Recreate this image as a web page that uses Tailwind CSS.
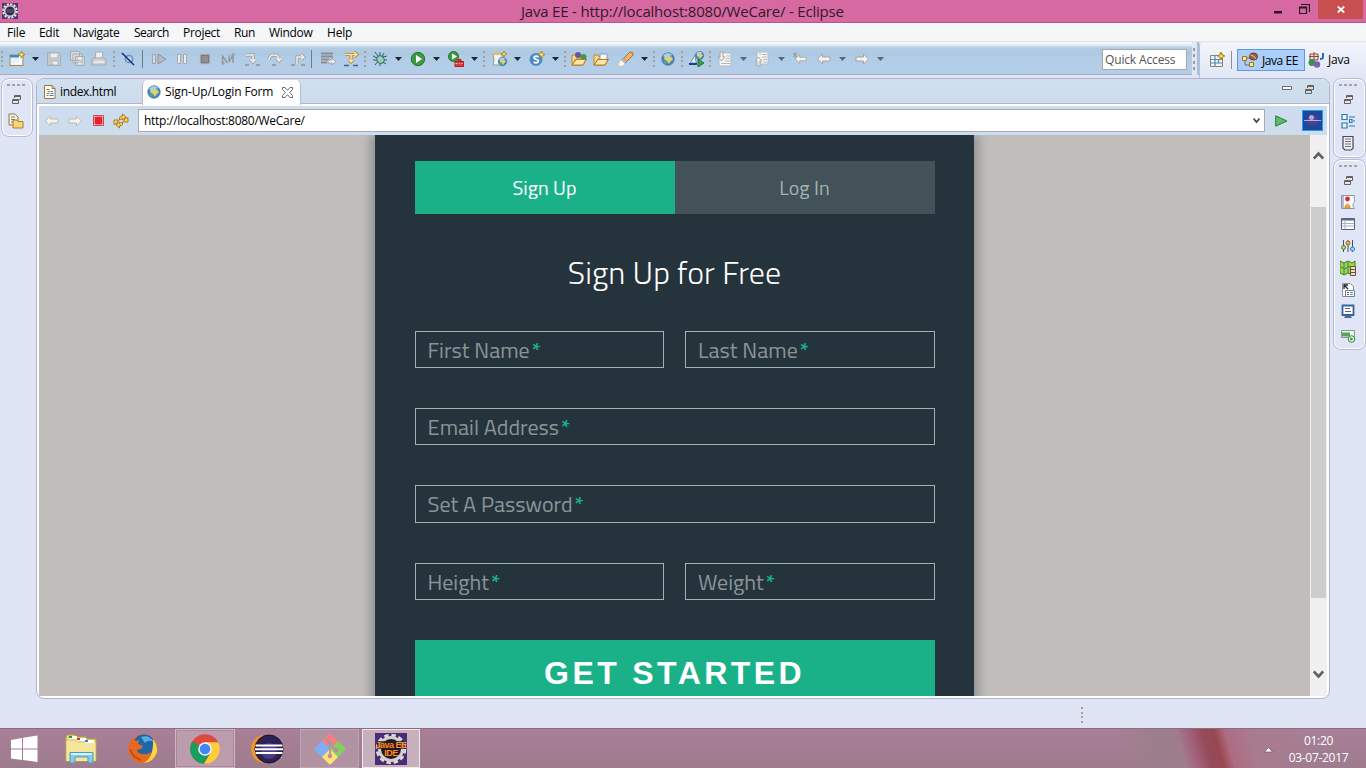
<!DOCTYPE html>
<html lang="en">
<head>
<meta charset="utf-8">
<title>Java EE - http://localhost:8080/WeCare/ - Eclipse</title>
<script src="https://cdn.jsdelivr.net/npm/@tailwindcss/browser@4"></script>
</head>
<body class="w-[1366px] h-[768px] overflow-hidden bg-[#dfe5f5] flex flex-col font-['Open_Sans','Noto_Sans',sans-serif] text-[12px] text-black">

<!-- shared icon sprite -->
<svg class="hidden">
  <symbol id="handle" viewBox="0 0 2 16"><path d="M0 0h2v2H0zM0 5h2v2H0zM0 9h2v2H0zM0 14h2v2H0z" fill="#a89e92"/></symbol>
  <symbol id="down" viewBox="0 0 7 4"><path d="M0 0h7L3.500 4z" fill="currentColor"/></symbol>
  <symbol id="restore" viewBox="0 0 9 9"><path d="M2.500 3V.5h6v4H7M3 1.500h5M.5 4.500h6v4h-6zM1 5.500h5" fill="none" stroke="#6a625a"/></symbol>
  <symbol id="globe" viewBox="0 0 16 16"><circle cx="8" cy="8" r="6.200" fill="#4583c4" stroke="#4a6f96" stroke-width=".8"/><path d="M3 5q2-3 5-3l4 1.500-2 3-2.500 1-2-1z" fill="#a8d0e6"/><path d="M5 5l3 2 3-2 2 3-3 3-1 2-2-3-3-2z" fill="#e3d36a"/><path d="M3 9l3 1 1 3-2 0zM10 4l2 1-1 2z" fill="#4fae8c"/></symbol>
  <symbol id="folder" viewBox="0 0 16 16"><path d="M1 4h4l1 2h7v3H5l-3 5H1z" fill="#f7d98b" stroke="#b98a35"/><path d="M1 14L5 8h10.500L12 14z" fill="#fbe6a2" stroke="#b57d22"/></symbol>
  <symbol id="star" viewBox="0 0 6 6"><path d="M3 0l.9 2.100L6 3 3.900 3.900 3 6 2.100 3.900 0 3 2.100 2.100z" fill="#fbe27a" stroke="#a78213" stroke-width=".8"/></symbol>
  <symbol id="arrowL" viewBox="0 0 16 14"><path d="M1.500 7l5-5v3h7.500v4H6.500v3z" fill="#f5f3ee" stroke="currentColor"/></symbol>
  <symbol id="arrowR" viewBox="0 0 16 14"><path d="M14.500 7l-5-5v3H2v4h7.500v3z" fill="#f5f3ee" stroke="currentColor"/></symbol>
</svg>

<!-- title bar -->
<header class="h-[23px] shrink-0 bg-[#d668a2] border-b border-[#b5578b] flex items-start">
  <svg class="w-4 h-4 mt-[3px] ml-[2px]" viewBox="0 0 16 16"><rect width="16" height="16" fill="#4e3a70"/><circle cx="8" cy="8" r="6.800" fill="none" stroke="#e8e6e2" stroke-width="2" stroke-dasharray="2.200 1.360"/><circle cx="8" cy="8" r="5.300" fill="#30264e" stroke="#d5d2cc" stroke-width="1.500"/><path d="M4.500 7h7M4.500 9h7" stroke="#6f6790"/></svg>
  <div class="ml-[503px] w-[330px] text-[15px] leading-[23px] tracking-[-0.2px] text-[#33192a] whitespace-nowrap">Java EE - http://localhost:8080/WeCare/ - Eclipse</div>
  <div class="ml-auto flex items-start">
    <svg class="w-[8px] h-[3px] mt-[11px]" viewBox="0 0 8 3"><path d="M0 0h8v2.500H0z" fill="#28141f"/></svg>
    <svg class="w-[11px] h-[10px] mt-[4px] ml-[17px]" viewBox="0 0 11 10"><path d="M2 .5h8.500V8M.5 3h7v6.500h-7zM1 4h6" fill="none" stroke="#28141f" stroke-width="1.200"/></svg>
    <div class="ml-[8px] w-[45px] h-[19px] mr-[3px] bg-[#c74f50] grid place-items-center"><svg class="w-[8px] h-[7px]" viewBox="0 0 8 7"><path d="M.8.500l6.400 6M7.200.500l-6.400 6" stroke="#fff" stroke-width="1.800"/></svg></div>
  </div>
</header>

<!-- menu bar -->
<nav class="h-[19px] shrink-0 bg-[#f5f6f8] border-b border-[#e3e4e8] flex leading-[20px] whitespace-nowrap">
  <span class="ml-[7px] w-[32px] tracking-[-0.2px]">File</span><span class="w-[34px] tracking-[-0.3px]">Edit</span><span class="w-[61px] tracking-[-0.3px]">Navigate</span><span class="w-[49px] tracking-[-0.55px]">Search</span><span class="w-[51px] tracking-[-0.3px]">Project</span><span class="w-[35px] tracking-[-0.4px]">Run</span><span class="w-[58px] tracking-[-0.3px]">Window</span><span class="tracking-[-0.2px]">Help</span>
</nav>

<!-- tool bar -->
<div class="h-[36px] shrink-0 flex">
  <div class="w-[1192px] h-[33px] pt-[2px] bg-[linear-gradient(180deg,#f4f8fc_0,#f0f5fa_2px,#b3cce4_6px,#adc8e2_12px,#b1cce6_15px,#b5cfe9_100%)] border-b border-[#a9abc6] flex items-center text-[#252525]">
    <svg class="ml-[1px] w-[2px] h-4"><use href="#handle"/></svg>
    <svg class="ml-[6px] w-4 h-4" viewBox="0 0 16 16"><rect x="1" y="4" width="13" height="10.500" fill="#e8f4fb" stroke="#b08b3e"/><path d="M1 4h9v2.500H1z" fill="#4287c0"/><path d="M3 13q8 0 9-5v5z" fill="#fff"/><use href="#star" x="9" y="0" width="7" height="7"/></svg>
    <svg class="ml-[7px] w-[7px] h-1"><use href="#down"/></svg>
    <svg class="ml-[7px] w-4 h-4" viewBox="0 0 16 16"><path d="M1.500 1.500h12l1 1v12h-13z" fill="#c6cacf" stroke="#a9adb2"/><path d="M4 2h8v5H4zM4 10h8v4H4z" fill="#eceef0" stroke="#b2b6ba"/><path d="M6 11v3" stroke="#999"/></svg>
    <svg class="ml-[8px] w-4 h-4" viewBox="0 0 16 16"><path d="M.5.500h9v9h-9zM3 3h9v9H3zM5.500 5.500h9v9h-9z" fill="#d7dadd" stroke="#a9adb2"/><path d="M7.500 6h5v3h-5zM8 11.500h4V14H8z" fill="#f5f5f5" stroke="#b2b6ba" stroke-width=".7"/></svg>
    <svg class="ml-[5px] w-4 h-4" viewBox="0 0 16 16"><path d="M5 1h7l-1 7H4z" fill="#eceef0" stroke="#a9adb2"/><path d="M1 8l2-1h10l2 1v6H1z" fill="#cfd2d5" stroke="#a4a8ac"/><path d="M3 11h10" stroke="#fff"/></svg>
    <svg class="ml-[6px] w-[2px] h-4"><use href="#handle"/></svg>
    <svg class="ml-[5px] w-4 h-4" viewBox="0 0 16 16"><circle cx="9" cy="8" r="3.600" fill="#b6d3e8" stroke="#5f95b8" stroke-width="1.500"/><path d="M2 2l12 12" stroke="#152d72" stroke-width="1.500"/></svg>
    <i class="ml-[6px] w-px h-[18px] bg-[#74797e]"></i>
    <svg class="ml-[8px] w-4 h-4" viewBox="0 0 16 16"><path d="M1.500 3.500h3v9h-3z" fill="#d6d8da" stroke="#a0a4a8"/><path d="M7 3l8 5-8 5z" fill="#b4b9bf" stroke="#8f959b"/></svg>
    <svg class="ml-[7px] w-4 h-4" viewBox="0 0 16 16"><path d="M3.500 3.500h3v9h-3zM9.500 3.500h3v9h-3z" fill="#eee" stroke="#a3a7ab"/></svg>
    <svg class="ml-[7px] w-4 h-4" viewBox="0 0 16 16"><path d="M3 3h10v10H3z" fill="#8c9094" stroke="#bcbfc2"/><path d="M4.500 4.500h7v7h-7z" fill="none" stroke="#777b7f"/></svg>
    <svg class="ml-[7px] w-4 h-4" viewBox="0 0 16 16"><path d="M2.500 12V5l5 7M9 11l4-7v8M9 11V4" fill="none" stroke="#8d9297" stroke-width="1.300"/><circle cx="3" cy="12" r="1.700" fill="#9a9fa4"/><circle cx="13" cy="4" r="1.700" fill="#9a9fa4"/></svg>
    <svg class="ml-[8px] w-4 h-4" viewBox="0 0 16 16"><path d="M2 4h7v6M6.500 8L9 11l2.500-3" fill="none" stroke="#98999b" stroke-width="3"/><path d="M2 4h7v6M6.500 8L9 11l2.500-3" fill="none" stroke="#f1efeb" stroke-width="1.500"/><path d="M1 14h4M12 14h4" stroke="#8d9297" stroke-width="1.500"/></svg>
    <svg class="ml-[7px] w-4 h-4" viewBox="0 0 16 16"><path d="M2 9q0-5 5-5t5 5M9.500 7l2.500 3 2.500-3" fill="none" stroke="#98999b" stroke-width="3"/><path d="M2 9q0-5 5-5t5 5M9.500 7l2.500 3 2.500-3" fill="none" stroke="#f1efeb" stroke-width="1.500"/><path d="M5 14h4" stroke="#8d9297" stroke-width="1.500"/></svg>
    <svg class="ml-[7px] w-4 h-4" viewBox="0 0 16 16"><path d="M7 13V6h6M11 3.500L14 6l-3 2.500" fill="none" stroke="#98999b" stroke-width="3"/><path d="M7 13V6h6M11 3.500L14 6l-3 2.500" fill="none" stroke="#f1efeb" stroke-width="1.500"/><path d="M1 14h4M11 14h4" stroke="#8d9297" stroke-width="1.500"/></svg>
    <i class="ml-[5px] w-px h-[18px] bg-[#74797e]"></i>
    <svg class="ml-[8px] w-4 h-4" viewBox="0 0 16 16"><path d="M1 2.500h12M1 5.500h12M1 8.500h8M1 11.500h6" stroke="#8b8f93" stroke-width="2"/><path d="M8 9h4V7l3.500 3.500L12 14v-2H8z" fill="#f7f7f7" stroke="#9ba0a4"/></svg>
    <svg class="ml-[7px] w-4 h-4" viewBox="0 0 16 16"><path d="M2 3.500h11M8 4v6M11 1l3 2.500L11 6M5.500 8.500L8 11l2.500-2.500" fill="none" stroke="#b07c20" stroke-width="3"/><path d="M2 3.500h11M8 4v6M11 1l3 2.500L11 6M5.500 8.500L8 11l2.500-2.500" fill="none" stroke="#fbe5a4" stroke-width="1.500"/><path d="M1 14.500h5M10 14.500h5" stroke="#44648b" stroke-width="1.500"/></svg>
    <svg class="ml-[5px] w-[2px] h-4"><use href="#handle"/></svg>
    <svg class="ml-[6px] w-4 h-4" viewBox="0 0 16 16"><path d="M3 1l3 4M8 1v4M1 5l4 2M1 9h4M3 14l3-4M8 15v-4M14 13l-3-2M15 9h-4M12 2l-2 4M15 5l-4 1" stroke="#2c6160"/><ellipse cx="8.500" cy="8.500" rx="3.500" ry="4" fill="#98cfb0" stroke="#28656a" transform="rotate(-40 8.500 8.500)"/></svg>
    <svg class="ml-[7px] w-[7px] h-1"><use href="#down"/></svg>
    <svg class="ml-[8px] w-4 h-4" viewBox="0 0 16 16"><circle cx="8" cy="8" r="6.700" fill="#3d9a3f" stroke="#23722e"/><path d="M6 4l6 4-6 4z" fill="#fff"/></svg>
    <svg class="ml-[7px] w-[7px] h-1"><use href="#down"/></svg>
    <svg class="ml-[8px] w-4 h-4" viewBox="0 0 16 16"><circle cx="5.500" cy="5.500" r="5" fill="#3d9a3f" stroke="#23722e"/><path d="M4 2.500l5 3-5 3z" fill="#fff"/><path d="M7 10.500h8.500v5H7zM10 10V8.500h3V10" fill="#d93b3b" stroke="#b31a1d"/><path d="M7.500 12.500h2M11 12.500h1M13.500 12.500h1.500" stroke="#fbb"/></svg>
    <svg class="ml-[7px] w-[7px] h-1"><use href="#down"/></svg>
    <svg class="ml-[5px] w-[2px] h-4"><use href="#handle"/></svg>
    <svg class="ml-[7px] w-4 h-4" viewBox="0 0 16 16"><path d="M1 3h9v11H1q2-5 0-11z" fill="#eef4f7" stroke="#9e9b7d"/><path d="M1 2.500h8" stroke="#e5bd55" stroke-width="2"/><use href="#globe" x="5" y="5" width="11" height="11"/><use href="#star" x="9" y="0" width="6" height="6"/></svg>
    <svg class="ml-[6px] w-[7px] h-1"><use href="#down"/></svg>
    <svg class="ml-[8px] w-4 h-4" viewBox="0 0 16 16"><circle cx="7" cy="8.500" r="6.500" fill="#4c8cc4"/><path d="M9.500 6Q7 4.200 5.200 6q-.6 1.500 2 2.300 2.800.9 2 2.500Q7.500 12.700 4.700 11" fill="none" stroke="#fff" stroke-width="1.700"/><use href="#star" x="9" y="0" width="7" height="7"/></svg>
    <svg class="ml-[7px] w-[7px] h-1"><use href="#down"/></svg>
    <svg class="ml-[5px] w-[2px] h-4"><use href="#handle"/></svg>
    <svg class="ml-[5px] w-4 h-4" viewBox="0 0 16 16"><use href="#folder" width="16" height="16"/><circle cx="7" cy="4" r="3" fill="#6757a1"/><circle cx="12.500" cy="6" r="3" fill="#3f9653"/><path d="M1 14L5 8.500h10L12 14z" fill="#fbe6a2" stroke="#b57d22"/></svg>
    <svg class="ml-[6px] w-4 h-4" viewBox="0 0 16 16"><use href="#folder" width="16" height="16"/><path d="M7 3h7v6H7z" fill="#f5f9fc" stroke="#8da0b5"/><path d="M1 14L5 8.500h10L12 14z" fill="#fbe6a2" stroke="#b57d22"/></svg>
    <svg class="ml-[9px] w-4 h-4" viewBox="0 0 16 16"><path d="M12 1l3 1-.5 3L8 11 5 8z" fill="#efb45c" stroke="#a86d2f"/><path d="M5 7l4 4-3 2-3-3z" fill="#bfb6d8" stroke="#8a7d99" stroke-width=".6"/><path d="M3 9l4 4-3 2H0l1-3z" fill="#fffbe0" stroke="#d8c795" stroke-width=".6"/></svg>
    <svg class="ml-[7px] w-[7px] h-1"><use href="#down"/></svg>
    <svg class="ml-[5px] w-[2px] h-4"><use href="#handle"/></svg>
    <svg class="ml-[5px] w-4 h-4"><use href="#globe"/></svg>
    <svg class="ml-[5px] w-[2px] h-4"><use href="#handle"/></svg>
    <svg class="ml-[6px] w-4 h-4" viewBox="0 0 16 16"><use href="#globe" x="5" y="-1" width="11" height="11"/><path d="M1.500 12L6 4l.5 5 1 3z" fill="#e6f0f8" stroke="#5f7fae" stroke-width=".8"/><path d="M0 13h8" stroke="#203f86" stroke-width="2"/><path d="M9 8l6 4-6 4z" fill="#3aa043" stroke="#1f7a33"/></svg>
    <svg class="ml-[4px] w-[2px] h-4"><use href="#handle"/></svg>
    <svg class="ml-[6px] w-4 h-4" viewBox="0 0 16 16"><path d="M5 2h9v13H2V9" fill="#f3f4f5" stroke="#b9bcbe"/><path d="M9 5h4M9 7.500h4M8 10h5M4 12.500h9" stroke="#b4babf"/><path d="M3 1h3v5h2l-3.500 4L1 6h2z" fill="#f1eee8" stroke="#aaa69e"/></svg>
    <svg class="ml-[7px] w-[7px] h-1 text-[#5f676e]"><use href="#down"/></svg>
    <svg class="ml-[7px] w-4 h-4" viewBox="0 0 16 16"><path d="M3 6V1h11v12H8" fill="#f3f4f5" stroke="#b9bcbe"/><path d="M5 3h2M8 3.500h5M8 6h5M9 8.500h4M9 11h4" stroke="#b4babf"/><path d="M3 15h3v-5h2L4.500 6 1 10h2z" fill="#f1eee8" stroke="#aaa69e"/></svg>
    <svg class="ml-[8px] w-[7px] h-1 text-[#5f676e]"><use href="#down"/></svg>
    <svg class="ml-[7px] w-4 h-4 text-[#a9a69e]" viewBox="0 0 16 16"><use href="#arrowL" x="2" y="1" width="14" height="14"/><path d="M1 2l4 4M5 2L1 6M3 1v6" stroke="#8e9092" stroke-width=".8"/></svg>
    <svg class="ml-[8px] w-4 h-[14px] text-[#a3a4a3]"><use href="#arrowL"/></svg>
    <svg class="ml-[7px] w-[7px] h-1 text-[#5f676e]"><use href="#down"/></svg>
    <svg class="ml-[8px] w-4 h-[14px] text-[#a3a4a3]"><use href="#arrowR"/></svg>
    <svg class="ml-[7px] w-[7px] h-1 text-[#5f676e]"><use href="#down"/></svg>
    <div class="ml-auto mr-[5px] w-[85px] h-[21px] bg-white border border-[#a6a9ad] pl-[2px] leading-[19px] text-[#555] tracking-[-0.15px] whitespace-nowrap">Quick Access</div>
  </div>
  <div class="w-[7px] h-[33px] bg-[#e1e6f5] flex"><svg class="mt-[6px] ml-[1px] w-[2px] h-[22px]" viewBox="0 0 2 22"><path d="M0 0h2v3H0zM0 6h2v3H0zM0 13h2v3H0zM0 19h2v3H0z" fill="#a29b93"/></svg><i class="ml-[2px] w-[2px] h-[33px] bg-[#a6bfdb]"></i></div>
  <div class="flex-1 h-[36px] bg-linear-to-b from-[#f3f5fb] to-[#e0e6f5] border-l border-t rounded-tl-[3px] border-l-[#b9bfd6] border-t-[#eceff6] flex items-center pb-[2px]">
    <svg class="ml-[9px] w-4 h-4" viewBox="0 0 16 16"><path d="M1.500 3.500h12v11h-12z" fill="#edf5fa" stroke="#8b8465"/><path d="M2 7.500h11M6 4v10M9.500 7v4M2 11h11" stroke="#528cae" stroke-width="1.200"/><use href="#star" x="8" y="0" width="8" height="8"/></svg>
    <i class="ml-[6px] w-px h-[18px] bg-[#8a8e95]"></i>
    <div class="ml-[5px] w-[68px] h-[22px] border border-[#6197e0] bg-[#abcffa] flex items-center">
      <svg class="ml-[4px] w-4 h-4" viewBox="0 0 16 16"><path d="M3 9v4h6M4 6h5" fill="none" stroke="#746b58"/><path d="M.5 4.500h4v4h-4zM7.500 10.500h4v4h-4z" fill="#fbe69a" stroke="#99761d"/><ellipse cx="11.500" cy="4.500" rx="4" ry="3.600" fill="#96603e" stroke="#6b3e24"/><path d="M8.500 3q3 0 5.500 4" fill="none" stroke="#ecd0a0"/></svg>
      <span class="ml-[4px] pt-[2px] tracking-[-0.45px] whitespace-nowrap">Java EE</span>
    </div>
    <svg class="ml-[3px] w-4 h-4" viewBox="0 0 16 16"><path d="M2 2h8v6H2zM1 4.500h10M6 0v8" fill="#f0ded0" stroke="#8e4b3a"/><path d="M15 1v4q0 2-3 2" fill="none" stroke="#2a6fa8" stroke-width="2"/><circle cx="4" cy="10.500" r="3.500" fill="#38915a"/><circle cx="9" cy="12.500" r="3.200" fill="#7663b0"/></svg>
    <span class="ml-[4px] tracking-[-0.2px]">Java</span>
  </div>
</div>

<!-- workbench -->
<main class="h-[621px] shrink-0 flex items-start">
  <aside class="ml-px w-[32px] h-[59px] pr-[2px] rounded-lg border border-[#b8bbd2] bg-[#e1e6f6] shadow-[inset_0_0_0_1px_#fff] flex flex-col items-center">
    <svg class="mt-[5px] w-[18px] h-[2px]" viewBox="0 0 18 2"><path d="M0 0h3v2H0zM5 0h3v2H5zM10 0h3v2h-3zM15 0h3v2h-3z" fill="#aaa398"/></svg>
    <svg class="mt-[9px] w-[9px] h-[9px]"><use href="#restore"/></svg>
    <svg class="mt-[9px] w-4 h-4" viewBox="0 0 16 16"><path d="M1 1h6l3 3v8H1z" fill="#fdf5d7" stroke="#8f7b48"/><path d="M3 4h4M3 6.500h4M3 9h2" stroke="#4f7fb5"/><path d="M5 15V7h4l1 1.500h5V15z" fill="#f9d778" stroke="#b27d25"/></svg>
  </aside>

  <section class="ml-[3px] w-[1294px] h-[621px] rounded-lg border border-[#b1b4ce] bg-white overflow-hidden flex flex-col">
    <!-- editor tabs -->
    <div class="h-[25px] shrink-0 bg-linear-to-b from-[#d1e0ee] to-[#ccdcec] border-b border-[#b3b4d0] flex items-center">
      <svg class="ml-[7px] mt-[2px] w-[12px] h-[14px]" viewBox="0 0 12 14"><path d="M.5.500h7.500l3 3v10H.5z" fill="#fffdf0" stroke="#8f7b48"/><path d="M8 .5v3h3" fill="none" stroke="#8f7b48"/><path d="M2.500 4.500h3M2.500 8.500h3" stroke="#d8534d"/><path d="M3.500 6.500h3M2.500 10.500h2" stroke="#4c9f6a"/><path d="M7 6.500h2M6.500 8.500h3M5.500 10.500h4" stroke="#4f7fc5"/></svg>
      <span class="ml-[4px] pt-[2px] w-[82px] tracking-[-0.35px]">index.html</span>
      <div class="relative top-px w-[159px] h-[25px] rounded-t-[5px] bg-linear-to-b from-white to-[#fdfdff] border-x border-[#b9bbd4] flex items-center">
        <svg class="ml-[3px] w-4 h-4"><use href="#globe"/></svg>
        <span class="ml-[3px] w-[117px] tracking-[-0.14px] whitespace-nowrap">Sign-Up/Login Form</span>
        <svg class="w-[11px] h-[11px]" viewBox="0 0 11 11"><path d="M.5.500h2.500l2.500 2.800L8 .5h2.500v2L7.700 5.500l2.800 3v2H8L5.500 7.700 3 10.500H.5v-2l2.800-3L.5 2.500z" fill="#fff" stroke="#66696c"/></svg>
      </div>
      <svg class="ml-auto mb-[7px] w-[10px] h-[4px]" viewBox="0 0 10 4"><path d="M.5.500h9v3h-9z" fill="#fff" stroke="#6a6a6a"/></svg>
      <svg class="ml-[13px] mr-[15px] mb-[3px] w-[9px] h-[9px]"><use href="#restore"/></svg>
    </div>
    <!-- address bar -->
    <div class="mt-[2px] mx-[2px] h-[29px] shrink-0 bg-[#cdddee] flex items-center text-[#bdb9b2]">
      <svg class="ml-[5px] w-4 h-[14px]"><use href="#arrowL"/></svg>
      <svg class="ml-[7px] w-4 h-[14px]"><use href="#arrowR"/></svg>
      <svg class="ml-[10px] w-[11px] h-[11px]" viewBox="0 0 11 11"><path d="M.5.500h10v10H.5z" fill="#fff" stroke="#c94b4e"/><path d="M1.500 1.500h8v8h-8z" fill="#e5222e"/></svg>
      <svg class="ml-[9px] w-4 h-4" viewBox="0 0 16 16"><path d="M6.500 7V5q0-2 3-2V1L13 4 9.500 7V5.500zM12 5.500l3-1v4.500h-4.500zM9.500 9v2q0 2-3 2v2L3 12l3.500-3v1.500zM4 10.500l-3 1V7h4.500z" fill="#f7d05c" stroke="#a7761e" stroke-width=".9"/></svg>
      <div class="ml-[9px] w-[1127px] h-[23px] bg-white border border-[#a7abb1] flex items-center text-black">
        <span class="ml-[5px] tracking-[-0.27px] whitespace-nowrap">http://localhost:8080/WeCare/</span>
        <svg class="ml-auto mr-[4px] w-[7px] h-[7px]" viewBox="0 0 7 7"><path d="M.5 1.500l3 3.500 3-3.500" fill="none" stroke="#484848" stroke-width="1.800"/></svg>
      </div>
      <svg class="ml-[10px] w-[13px] h-[12px]" viewBox="0 0 13 12"><path d="M.7.800L12 6 .7 11.200z" fill="#5fbb65" stroke="#26803e"/></svg>
      <div class="ml-[14px] w-[21px] h-[21px] bg-[#1c479c] border border-[#259bee]"><svg class="w-[19px] h-[19px]" viewBox="0 0 19 19"><circle cx="9.500" cy="9.500" r="5.500" fill="#51408f"/><circle cx="8.500" cy="6.500" r="2.500" fill="#b5a3d0"/><path d="M1 9.500h17" stroke="#a7b1e4"/></svg></div>
    </div>
    <!-- browser viewport -->
    <div class="mx-[2px] h-[561px] bg-[#c1bdba] flex overflow-hidden">
      <div class="w-[1271px] flex justify-center overflow-hidden">
        <div class="h-[700px] w-[599px] bg-[#25333c] shadow-[0_4px_10px_4px_rgba(19,35,47,0.3)] pt-[26px] pl-[40px] pr-[39px] font-['Titillium_Web',Roboto,sans-serif]">
          <div class="h-[53px] grid grid-cols-2 text-center text-[20px] leading-[53px]">
            <div class="pr-px bg-[#1ab188] text-white">Sign Up</div>
            <div class="pr-px bg-[#435158] text-[#a0b3b0]">Log In</div>
          </div>
          <h1 class="mt-[38px] h-[40px] pr-px text-center font-light text-[32px] leading-[40px] tracking-[0.07px] text-white whitespace-nowrap">Sign Up for Free</h1>
          <form class="mt-[39px] flex flex-col gap-[40px] text-[22px] leading-[37px] text-[#8a9396]">
            <div class="flex justify-between"><div class="w-[249px] h-[37px] border border-[#a0b3b0] pl-[11.5px]">First Name<span class="ml-[2px] text-[#1ab188] font-semibold">*</span></div><div class="w-[250px] h-[37px] border border-[#a0b3b0] pl-[12px]">Last Name<span class="ml-[2px] text-[#1ab188] font-semibold">*</span></div></div>
            <div class="h-[37px] border border-[#a0b3b0] pl-[11.5px]">Email Address<span class="ml-[2px] text-[#1ab188] font-semibold">*</span></div>
            <div class="h-[38px] border border-[#a0b3b0] pl-[11.5px]">Set A Password<span class="ml-[2px] text-[#1ab188] font-semibold">*</span></div>
            <div class="flex justify-between"><div class="w-[249px] h-[37px] border border-[#a0b3b0] pl-[11.5px]">Height<span class="ml-[2px] text-[#1ab188] font-semibold">*</span></div><div class="w-[250px] h-[37px] border border-[#a0b3b0] pl-[12px]">Weight<span class="ml-[2px] text-[#1ab188] font-semibold">*</span></div></div>
            <button type="button" class="h-[70px] pr-px bg-[#1ab188] text-center font-['Liberation_Sans',sans-serif] font-bold text-[32px] leading-[66px] tracking-[3.4px] text-white whitespace-nowrap flex justify-center">GET STARTED</button>
          </form>
        </div>
      </div>
      <div class="w-[17px] bg-[#f0f0f0] flex flex-col items-center">
        <svg class="mt-[16px] w-[11px] h-[9px]" viewBox="0 0 11 9"><path d="M.8 7.500L5.500 2.500l4.700 5" fill="none" stroke="#606060" stroke-width="2.600"/></svg>
        <div class="mt-[47px] w-[15px] h-[391px] bg-[#cdcdcd]"></div>
        <svg class="mt-[72px] w-[11px] h-[9px]" viewBox="0 0 11 9"><path d="M.8 1.500l4.700 5 4.700-5" fill="none" stroke="#606060" stroke-width="2.600"/></svg>
      </div>
    </div>
  </section>

  <aside class="ml-[3px] w-[33px] flex flex-col">
    <div class="h-[80px] pr-[3px] rounded-lg border border-[#b8bbd2] bg-[#e1e6f6] shadow-[inset_0_0_0_1px_#fff] flex flex-col items-center">
      <svg class="mt-[5px] w-[18px] h-[2px]" viewBox="0 0 18 2"><path d="M0 0h3v2H0zM5 0h3v2H5zM10 0h3v2h-3zM15 0h3v2h-3z" fill="#aaa398"/></svg>
      <svg class="mt-[9px] w-[9px] h-[9px]"><use href="#restore"/></svg>
      <svg class="mt-[9px] w-4 h-4" viewBox="0 0 16 16"><path d="M2 1.500h5v5H2zM2 10h5v5H2zM9.500 6.500h2.500v3H9.500z" fill="#e9f6fd" stroke="#2c79b4" stroke-width="1.200"/><path d="M9 4h6M13 8h2M9 13h6" stroke="#2c79b4"/></svg>
      <svg class="mt-[6px] w-4 h-4" viewBox="0 0 16 16"><path d="M3 1.500h10v12l-2 1.500H5l-2-2z" fill="#eef0f6" stroke="#48484f" stroke-width="1.200"/><path d="M5 4h6M5 6.500h6M5 9h6M5 11.500h6" stroke="#6b6e7c"/></svg>
    </div>
    <div class="mt-[1px] h-[191px] pr-[3px] rounded-lg border border-[#b8bbd2] bg-[#e1e6f6] shadow-[inset_0_0_0_1px_#fff] flex flex-col items-center">
      <svg class="mt-[5px] w-[18px] h-[2px]" viewBox="0 0 18 2"><path d="M0 0h3v2H0zM5 0h3v2H5zM10 0h3v2h-3zM15 0h3v2h-3z" fill="#aaa398"/></svg>
      <svg class="mt-[9px] w-[9px] h-[9px]"><use href="#restore"/></svg>
      <svg class="mt-[9px] w-4 h-4" viewBox="0 0 16 16"><path d="M1.500 1.500h13q-1 2 0 4t-1 4 1 5H1.500z" fill="#fafbff" stroke="#8f97a6"/><path d="M3 2v12" stroke="#6e80ac"/><circle cx="7.500" cy="5" r="2.400" fill="#d92c30"/><path d="M5 14v-2l2.500-2 2.500 2v2z" fill="#f3ae38" stroke="#bf761b" stroke-width=".7"/></svg>
      <svg class="mt-[6px] w-4 h-4" viewBox="0 0 16 16"><path d="M1.500 2.500h13v11h-13z" fill="#f8fafc" stroke="#59667f"/><path d="M1.500 3.500h13" stroke="#59667f" stroke-width="2"/><path d="M5 5v8M2 7.500h12M2 10h12" stroke="#aab5c4"/></svg>
      <svg class="mt-[6px] w-4 h-4" viewBox="0 0 16 16"><path d="M3.500 2v12M8 2v12M12.500 2v12" stroke="#444b6a"/><circle cx="3.500" cy="9.500" r="2" fill="#b2d56d" stroke="#577c2e"/><circle cx="8" cy="5" r="2" fill="#efb64e" stroke="#9b6718"/><circle cx="12.500" cy="11" r="2" fill="#a6daf4" stroke="#3279a9"/></svg>
      <svg class="mt-[6px] w-4 h-4" viewBox="0 0 16 16"><path d="M0 1l4 2 4-2 4 2 3-2v12l-3 2-4-2-4 2-4-2z" fill="#9fdc35" stroke="#467421"/><path d="M4 3v11M8 2v11M1 7l4 2 4-3 3 2" fill="none" stroke="#347b8c"/><path d="M10.500 6.500h5v9h-5zM10.500 9.500h5M10.500 12.500h5" fill="#efe0bb" stroke="#65553e"/></svg>
      <svg class="mt-[6px] w-4 h-4" viewBox="0 0 16 16"><path d="M2.500 1.500h8l3 3v10h-11z" fill="#fdfdf8" stroke="#8d8f8c"/><path d="M4 7V3h4M4 3l4 4" fill="none" stroke="#16243e" stroke-width="1.300"/><path d="M5.500 8.500h9v6h-9z" fill="#fff" stroke="#6186a4"/><path d="M7 10.500h2M7 12.500h2" stroke="#c23"/><path d="M10 10.500h3M10 12.500h3" stroke="#4a8"/></svg>
      <svg class="mt-[6px] w-4 h-4" viewBox="0 0 16 16"><path d="M2.500 1.500h11v9.500h-11z" fill="#fff" stroke="#34649f" stroke-width="1.800"/><path d="M5 4.500h5M5 7.500h6" stroke="#5b646e"/><path d="M4 14h8l-1.500-2.500h-5z" fill="#4d6b91"/></svg>
      <svg class="mt-[8px] w-4 h-4" viewBox="0 0 16 16"><path d="M1.500 2.500h13v7h-13z" fill="#eef4ea" stroke="#92958f"/><path d="M2 4.500h8v4H2z" fill="#58a45d"/><circle cx="11.500" cy="11" r="3.300" fill="#e8f5e6" stroke="#2f8a3f"/><path d="M10.300 9l3 2-3 2z" fill="#2f9a40"/></svg>
    </div>
  </aside>
</main>

<!-- status line -->
<div class="h-[29px] shrink-0"><svg class="ml-[1081px] mt-[8px] w-[2px] h-4"><use href="#handle"/></svg></div>

<!-- taskbar -->
<footer class="flex-1 border-t border-[#8b6d83] bg-linear-to-b from-[#a97f97] to-[#9d7c8d] flex">
  <div class="w-[1366px] h-[39px] flex items-center bg-[linear-gradient(74deg,transparent_82%,#9b7f8a_84.500%,#a07c8a_86.200%,#a2607a_87.100%,#954b5a_88%,#984750_88.900%,#ad6c82_89.700%,#a97b8e_91.500%,transparent_96%)]">
    <svg class="ml-[10px] w-[28px] h-[28px]" viewBox="0 0 28 28"><path d="M1 5l11-2v10.500H1zM13 2.800L27.500.500v13H13zM1 14.500h11V25L1 23.500zM13 14.500h14.500v12.500L13 25z" fill="#fff"/></svg>
    <svg class="ml-[27px] w-[32px] h-[30px]" viewBox="0 0 32 30"><path d="M1 4l1-3h8l1 2h10l1 2h9v22H1z" fill="#e9d57b" stroke="#bda44c"/><path d="M4 2h8v3H4zM12 4h9v3h-9zM20 6h9v3h-9z" fill="#fff"/><path d="M4 2h3v2H4z" fill="#1a9e35"/><path d="M12 4h3v2h-3z" fill="#d03727"/><path d="M20 6h3v2h-3z" fill="#268ad1"/><path d="M1.500 7h9l2 2h18v18h-29z" fill="#f4e69b"/><path d="M5 29V18.500h23V29h-5v-6H10v6z" fill="#8dc9e6" stroke="#4a9bc5"/><path d="M6 20h21" stroke="#d7f1fa" stroke-width="2"/></svg>
    <svg class="ml-[31px] w-[30px] h-[30px]" viewBox="0 0 30 30"><circle cx="15" cy="15" r="14.500" fill="#e46c22"/><circle cx="16" cy="11.500" r="11" fill="#1e66a8"/><path d="M13 3q8-3 13 5-6-3-9 1z" fill="#57aede"/><path d="M25 5q5 6 4 13-3 10-13 11 10-6 9-24z" fill="#fbd447"/><path d="M2 7l3-2 3 2 3-1-1 4 5 2-2 3-4 1q1 4 6 4 5 1 8-3-1 9-11 9Q2 24 1 14z" fill="#e7681f"/><path d="M2 15q3 9 11 11" fill="none" stroke="#c84817" stroke-width="2"/></svg>
    <div class="ml-[17px] w-[60px] h-[39px] border border-[#cdb5c3] outline outline-1 -outline-offset-2 outline-[#8a6b7f]/40 bg-[#bc9dae] grid place-items-center">
      <svg class="w-[30px] h-[30px]" viewBox="0 0 30 30"><circle cx="15" cy="15" r="14.800" fill="#db4b3f"/><path d="M15 15L2.200 7.600A14.800 14.800 0 0 0 14 29.800L20.500 18z" fill="#17a05d"/><path d="M15 8.300h13.200A14.800 14.800 0 0 1 14 29.800L20.800 18.400z" fill="#ffcd40"/><circle cx="15" cy="15" r="6.800" fill="#f4f4f4"/><circle cx="15" cy="15" r="5.300" fill="#4285f4"/></svg>
    </div>
    <svg class="ml-[16px] w-[33px] h-[30px]" viewBox="0 0 33 30"><circle cx="14" cy="15" r="14" fill="#f39324"/><circle cx="18" cy="15" r="14" fill="#2c2255" stroke="#17132f"/><circle cx="18" cy="17" r="8" fill="#493b86"/><path d="M4.500 11.500h27M4 15.200h28M4.500 19h27" stroke="#fff" stroke-width="1.900"/></svg>
    <div class="ml-[16px] w-[59px] h-[39px] border border-[#bea5b4] bg-[#b192a2] grid place-items-center">
      <svg class="w-[32px] h-[32px]" viewBox="0 0 32 32"><path d="M15 1q1-1 2 0l7 7-8 8-8-8z" fill="#f87f7c"/><path d="M24 8l7 7q1 1 0 2l-7 7-8-8z" fill="#84d15d"/><path d="M8 8l8 8-8 8-7-7q-1-1 0-2z" fill="#7ab0f6"/><path d="M16 16l8 8-7 7q-1 1-2 0l-7-7z" fill="#ffe376"/><path d="M11 5l5 5v13M16 11l6 6" fill="none" stroke="#b192a2" stroke-width="1.800"/><circle cx="16" cy="10.500" r="2.300" fill="#b192a2"/><circle cx="22" cy="17" r="2.300" fill="#b192a2"/><circle cx="16" cy="23" r="2.300" fill="#b192a2"/></svg>
    </div>
    <div class="ml-[3px] w-[58px] h-[39px] border border-[#f1e8ee] bg-[#c5b0bc] grid place-items-center">
      <div class="relative w-[32px] h-[32px] bg-[#4a2c77]">
        <svg class="w-8 h-8" viewBox="0 0 32 32"><circle cx="16" cy="16" r="13.300" fill="none" stroke="#dddad7" stroke-width="4" stroke-dasharray="4.200 2.764"/><circle cx="16" cy="16" r="11.500" fill="#211827" stroke="#d2cfcd" stroke-width="3"/><path d="M2 8h28v8H2z" fill="#2a1b22" opacity=".75"/></svg>
        <div class="absolute inset-x-[-2px] top-[8px] text-center text-[9px] leading-[8px] text-[#ff8c1a] font-['Liberation_Sans',sans-serif] font-bold tracking-[-0.5px] whitespace-nowrap">Java EE<br>IDE</div>
      </div>
    </div>
    <svg class="ml-auto mt-[3px] w-[9px] h-[6px]" viewBox="0 0 9 6"><path d="M4.500.500l4 4.500h-8z" fill="#fff" stroke="#5d3e50" stroke-width=".6"/></svg>
    <div class="ml-[15px] mr-[17px] w-[61px] text-center leading-[17px] text-white tracking-[-0.3px] whitespace-nowrap">01:20<br>03-07-2017</div>
  </div>
</footer>
</body>
</html>
